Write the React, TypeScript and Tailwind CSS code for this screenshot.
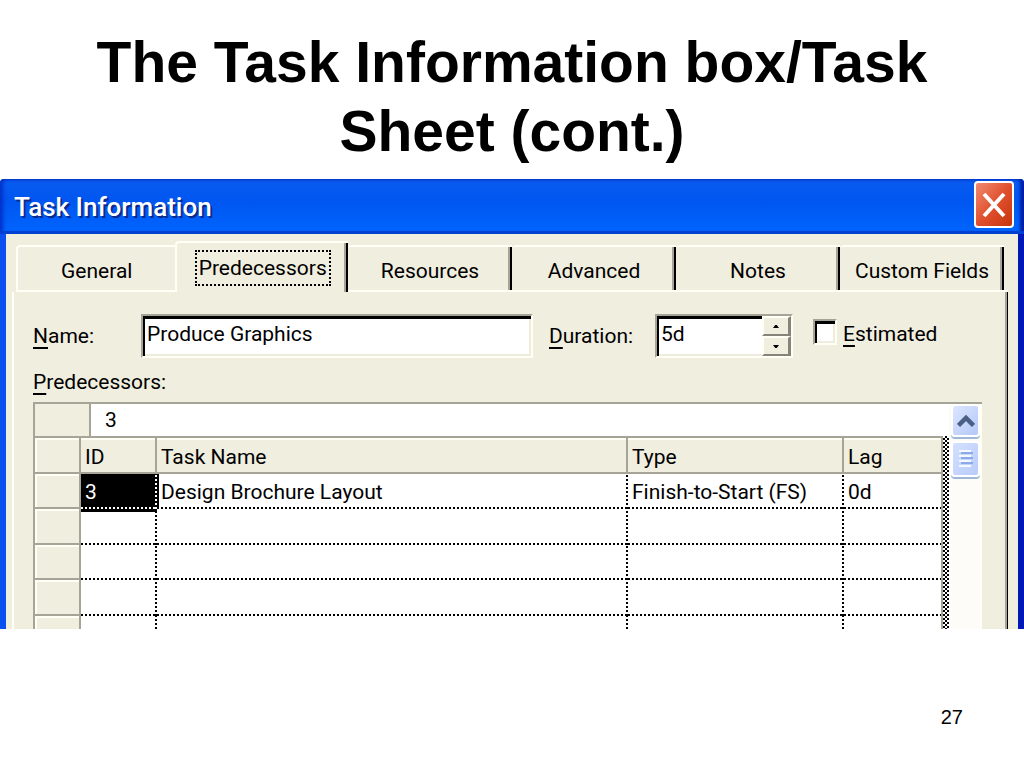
import { useState } from 'react'
import clsx from 'clsx'

const TABS = [
  'General',
  'Predecessors',
  'Resources',
  'Advanced',
  'Notes',
  'Custom Fields',
]

interface Predecessor {
  id: string
  task: string
  type: string
  lag: string
}

const EMPTY: Predecessor = { id: '', task: '', type: '', lag: '' }

const ROWS: Predecessor[] = [
  {
    id: '3',
    task: 'Design Brochure Layout',
    type: 'Finish-to-Start (FS)',
    lag: '0d',
  },
  EMPTY,
  EMPTY,
  EMPTY,
]

const SUNKEN =
  'border-2 border-t-[#a5a496] border-l-[#a5a496] border-r-[#fffff6] border-b-[#fffff6] bg-white shadow-[inset_2px_3px_#000,inset_-2px_-2px_#eeecde]'

// dotted line along the bottom and the right edge of a cell
const DOTTED =
  'bg-[repeating-linear-gradient(90deg,#000_0_2px,transparent_2px_4px),repeating-linear-gradient(0deg,#000_0_2px,transparent_2px_4px)] [background-size:100%_2px,2px_100%] [background-position:bottom,right] bg-no-repeat'

const DOTTED_BOTTOM =
  'bg-[repeating-linear-gradient(90deg,#000_0_2px,transparent_2px_4px)] [background-size:100%_2px] [background-position:bottom] bg-no-repeat'

const DOTTED_RIGHT =
  'bg-[repeating-linear-gradient(0deg,#000_0_2px,transparent_2px_4px)] [background-size:2px_100%] [background-position:right] bg-no-repeat'

const DOTTED_WHITE =
  'bg-[repeating-linear-gradient(90deg,#fff_0_2px,transparent_2px_4px),repeating-linear-gradient(0deg,#fff_0_2px,transparent_2px_4px)] [background-size:100%_2px,2px_100%] [background-position:bottom,right] bg-no-repeat'

const HEAD_CELL =
  'border-r-2 border-b-2 border-[#a5a496] pt-1 pl-1 text-left font-normal shadow-[inset_0_2px_#fffff6]'

const ROW_HEAD =
  'border-r-2 border-b-2 border-[#a5a496] bg-[#f0eedf] shadow-[inset_2px_2px_#fffff6]'

function Mnemonic({ text }: { text: string }) {
  return (
    <>
      <span className="underline decoration-2 underline-offset-4">
        {text[0]}
      </span>
      {text.slice(1)}
    </>
  )
}

function TitleBar() {
  return (
    <header className="flex h-[55px] items-center justify-between rounded-t bg-linear-to-b from-[#0a5cf0] via-[#0056f0] via-40% to-[#0066ff] pr-2.5 pl-3.5 shadow-[inset_0_-3px_#0040d0,inset_3px_0_4px_#0030c8,inset_-4px_0_3px_#0020a8]">
      <h2 className="text-[26px] leading-8 font-medium text-white [text-shadow:2px_2px_#0a2a8c]">
        Task Information
      </h2>
      <button
        type="button"
        aria-label="Close"
        className="mb-1 flex h-[47px] w-10 items-center justify-center rounded border-2 border-white bg-linear-to-br from-[#f08a70] via-[#e0502c] to-[#c83408]"
      >
        <svg width="24" height="26" viewBox="0 0 24 26" aria-hidden="true">
          <path
            d="M2 2 L22 24 M22 2 L2 24"
            stroke="#fff"
            strokeWidth="4"
            fill="none"
          />
        </svg>
      </button>
    </header>
  )
}

function TabStrip({
  active,
  onChange,
}: {
  active: string
  onChange: (tab: string) => void
}) {
  return (
    <div role="tablist" className="flex items-end pt-[7px]">
      <span className="w-1" />
      {TABS.map((tab) => (
        <button
          key={tab}
          type="button"
          role="tab"
          aria-selected={tab === active}
          onClick={() => onChange(tab)}
          className={clsx(
            'flex basis-0 items-center justify-center rounded-tl border-t-2 border-t-[#fffff6]',
            tab === active
              ? 'h-[51px] grow-26 border-l-2 border-l-[#fffff6] shadow-[inset_-2px_0_#000,inset_-4px_0_#a5a496]'
              : 'h-[47px] border-b-2 border-b-[#fffff6] pt-1',
            tab === 'General' && 'grow-24 border-l-2 border-l-[#fffff6]',
            tab !== active &&
              tab !== 'General' &&
              'grow-25 shadow-[inset_-2px_0_#000,inset_-4px_0_#a5a496]'
          )}
        >
          <span
            className={clsx(
              'px-0.5 leading-8',
              tab === active && 'outline-2 outline-dotted outline-black'
            )}
          >
            {tab}
          </span>
        </button>
      ))}
      <span className="h-0.5 w-1 bg-[#fffff6]" />
    </div>
  )
}

function SpinButton({ label, down }: { label: string; down?: boolean }) {
  return (
    <button
      type="button"
      aria-label={label}
      className="flex flex-1 items-center justify-center border-t-2 border-r-3 border-b-2 border-l-2 border-t-[#fffff6] border-r-[#85847a] border-b-[#85847a] border-l-[#fffff6] bg-[#f0eedf]"
    >
      <svg width="6" height="5" viewBox="0 0 8 6" aria-hidden="true">
        <path d={down ? 'M0 1 H8 L5 5 H3 Z' : 'M0 5 H8 L5 1 H3 Z'} />
      </svg>
    </button>
  )
}

function TaskFields() {
  return (
    <div className="flex h-11 items-center">
      <label htmlFor="task-name" className="w-[108px]">
        <Mnemonic text="Name:" />
      </label>
      <input
        id="task-name"
        defaultValue="Produce Graphics"
        className={clsx(SUNKEN, 'h-11 min-w-0 flex-1 pb-1 pl-1 outline-none')}
      />
      <label htmlFor="task-duration" className="w-[122px] pl-4">
        <Mnemonic text="Duration:" />
      </label>
      <div className={clsx(SUNKEN, 'flex h-11 w-[138px]')}>
        <input
          id="task-duration"
          defaultValue="5d"
          className="min-w-0 flex-1 bg-transparent pb-1 pl-1 outline-none"
        />
        <div className="flex w-[29px] flex-col">
          <SpinButton label="Increase duration" />
          <SpinButton label="Decrease duration" down />
        </div>
      </div>
      <input
        id="task-estimated"
        type="checkbox"
        className={clsx(SUNKEN, 'mb-2 ml-5 h-[26px] w-6 appearance-none')}
      />
      <label htmlFor="task-estimated" className="w-[145px] pb-1 pl-1.5">
        <Mnemonic text="Estimated" />
      </label>
    </div>
  )
}

function PredecessorTable() {
  return (
    <table className="w-full table-fixed border-separate border-spacing-0">
      <colgroup>
        <col className="w-[46px]" />
        <col className="w-[76px]" />
        <col />
        <col className="w-[216px]" />
        <col className="w-[99px]" />
      </colgroup>
      <thead>
        <tr className="h-9 bg-[#f0eedf]">
          <th className={ROW_HEAD} aria-label="Row" />
          <th className={HEAD_CELL}>ID</th>
          <th className={HEAD_CELL}>Task Name</th>
          <th className={HEAD_CELL}>Type</th>
          <th className={HEAD_CELL}>Lag</th>
        </tr>
      </thead>
      <tbody>
        {ROWS.map((row, i) => (
          <tr key={i} className="odd:h-[35px] even:h-9">
            <td className={ROW_HEAD} />
            <td
              className={clsx(
                'pl-1',
                row.id
                  ? [
                      DOTTED_WHITE,
                      'relative bg-black text-white shadow-[0_3px_#000,2px_0_#000]',
                    ]
                  : DOTTED
              )}
            >
              {row.id}
            </td>
            <td className={clsx(DOTTED, 'pl-1')}>{row.task}</td>
            <td className={clsx(DOTTED, 'pl-1')}>{row.type}</td>
            <td
              className={clsx(
                DOTTED_BOTTOM,
                'border-r-2 border-[#a5a496] pl-1'
              )}
            >
              {row.lag}
            </td>
          </tr>
        ))}
        <tr className="h-[13px]">
          <td className="border-r-2 border-[#a5a496] bg-[#f0eedf] shadow-[inset_2px_2px_#fffff6]" />
          <td className={DOTTED_RIGHT} />
          <td className={DOTTED_RIGHT} />
          <td className={DOTTED_RIGHT} />
          <td className="border-r-2 border-[#a5a496]" />
        </tr>
      </tbody>
    </table>
  )
}

function ScrollBar() {
  return (
    <div className="flex w-[33px] flex-col gap-1 border-r-2 border-[#fffff6] bg-[#fdfcf8] pl-0.5">
      <button
        type="button"
        aria-label="Scroll up"
        className="flex h-[33px] items-center justify-center rounded border-2 border-white bg-linear-to-br from-[#dce6ff] to-[#b4c8f8] shadow-[0_2px_#a0b8d8]"
      >
        <svg width="18" height="14" viewBox="0 0 18 14" aria-hidden="true">
          <path
            d="M1.5 11.5 L9 4 L16.5 11.5"
            stroke="#4a5f86"
            strokeWidth="4.5"
            fill="none"
          />
        </svg>
      </button>
      <div className="flex h-9 items-center justify-center rounded border-2 border-white bg-linear-to-br from-[#d4e0ff] to-[#b8ccfa] shadow-[0_2px_#a0b8d8]">
        <svg width="14" height="18" viewBox="0 0 14 18" aria-hidden="true">
          <path
            d="M0 1 H12 M0 6 H12 M0 11 H12 M0 16 H12"
            stroke="#f4f8ff"
            strokeWidth="2"
          />
          <path
            d="M2 3 H14 M2 8 H14 M2 13 H14"
            stroke="#8caae8"
            strokeWidth="2"
          />
        </svg>
      </div>
    </div>
  )
}

function TaskDialog() {
  const [tab, setTab] = useState('Predecessors')

  return (
    <section
      aria-label="Task Information"
      className="font-[Roboto,sans-serif] text-[21px] leading-6 text-black"
    >
      <TitleBar />
      <div className="border-x-6 border-l-[#0a50f0] border-r-[#0018b8] bg-[#f0eedf] pr-2.5 pl-1.5">
        <TabStrip active={tab} onChange={setTab} />
        <div
          role="tabpanel"
          className="border-r border-l-2 border-r-black border-l-[#fffff6] pt-[22px] pr-[25px] pl-[19px] shadow-[inset_-2px_0_#a5a496]"
        >
          <TaskFields />
          <label htmlFor="entry" className="mt-3 mb-2 block">
            <Mnemonic text="Predecessors:" />
          </label>
          <div className="flex border-t-2 border-l-2 border-[#a5a496] bg-white">
            <div className="min-w-0 flex-1">
              <div className="flex h-8">
                <span className="w-14 border-r-2 border-[#a5a496] bg-[#f0eedf]" />
                <input
                  id="entry"
                  defaultValue="3"
                  className="min-w-0 flex-1 pl-3.5 outline-none"
                />
              </div>
              <div className="flex">
                <div className="min-w-0 flex-1 border-t-2 border-[#a5a496]">
                  <PredecessorTable />
                </div>
                <span className="w-1.5 bg-[repeating-conic-gradient(#000_0_25%,#fff_0_50%)] [background-size:4px_4px]" />
              </div>
            </div>
            <ScrollBar />
          </div>
        </div>
      </div>
    </section>
  )
}

export default function App() {
  return (
    <main className="min-h-screen bg-white font-['Liberation_Sans',sans-serif] text-black">
      <h1 className="mx-auto mb-[13px] max-w-4xl pt-7 text-center text-[57px] leading-[69px] font-bold">
        The Task Information box/Task Sheet (cont.)
      </h1>
      <TaskDialog />
      <footer className="mt-19 pr-[61px] text-right text-[20px] leading-6">
        27
      </footer>
    </main>
  )
}
